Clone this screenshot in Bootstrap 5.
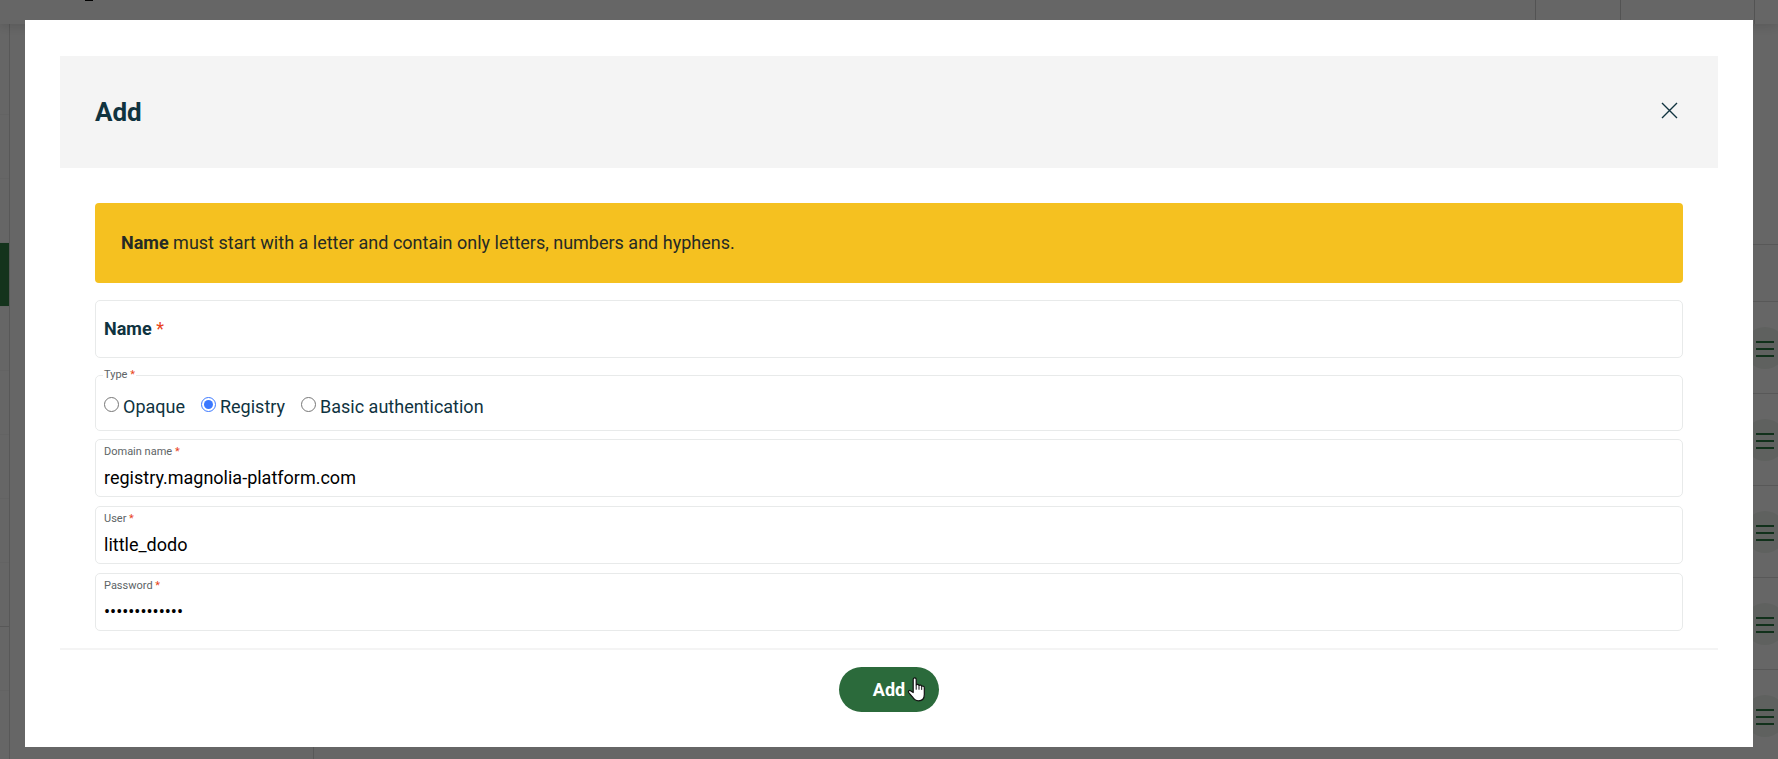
<!DOCTYPE html>
<html lang="en">
<head>
<meta charset="utf-8">
<meta name="viewport" content="width=device-width, initial-scale=1">
<title>Add</title>
<link href="https://cdn.jsdelivr.net/npm/bootstrap@5.3.0/dist/css/bootstrap.min.css" rel="stylesheet">
<style>
  body { font-family: Roboto, "Liberation Sans", sans-serif; font-size: 18px; line-height: 24px; color: #10333f; overflow: hidden; }
  a { color: inherit; }

  /* page behind the dialog */
  .topbar { height: 24px; box-shadow: 0 2px 12px rgba(0,0,0,.14); background: #fff; z-index: 1; }
  .topbar .cell { border-left: 1px solid #d0d0d0; }
  .brand-tail { width: 8px; height: 1px; margin-left: 85px; background: #000; }
  .cell-s { width: 85px; }
  .cell-m { width: 134px; }
  .cell-e { width: 24px; }
  .side { width: 10px; border-right: 1px solid #dcdcdc; padding-top: 27px; }
  .side a { display: block; height: 64px; border-bottom: 1px solid #f7f7f7; }
  .side a.current { background: #348148; width: 9px; }
  .side a.ruled { border-bottom-color: #dcdcdc; }
  .subnav { width: 304px; border-right: 1px solid #dcdcdc; }
  .listing { padding-top: 220px; }
  .list-head { height: 58px; border-top: 1px solid #dcdcdc; border-bottom: 1px solid #dcdcdc; background: #fcfcfc; }
  .list-line { height: 92px; border-bottom: 1px solid #dcdcdc; }
  .menu-btn { width: 42px; height: 42px; margin-right: -8px; border: 0; border-radius: 50%; background: #edf3ed; padding: 0; }

  /* dialog */
  .veil { background: rgba(0,0,0,.6); z-index: 10; padding: 20px 25px 13px; }
  .dialog { background: #fff; padding: 36px 35px 35px; }
  .dialog-head { background: #f4f4f4; height: 112px; padding: 0 35px; }
  .dialog-head h1 { font-size: 26px; line-height: 32px; font-weight: 700; margin: 0; color: #10333f; }
  .close-btn { border: 0; background: none; padding: 0 5px 4px; line-height: 0; }
  .dialog-body { padding: 35px 35px 17px; border-bottom: 2px solid #f4f4f4; }
  .notice { background: #f5c120; border: 0; border-radius: 4px; padding: 28px 26px; margin-bottom: 17px; color: #252a25; }
  .field { border: 1px solid #e8eaea; border-radius: 5px; height: 58px; padding: 4px 8px 0; margin-bottom: 9px; }
  .field label.tiny, .type-set legend { font-size: 11px; line-height: 16px; color: #5d6466; }
  .field input { border: 0; outline: 0; padding: 0; color: #000; background: none; height: 34px; width: 100%; }
  .field-lone { padding: 0 8px; }
  .req { color: #e8441c; }
  .type-set { border: 1px solid #e8eaea; border-radius: 5px; margin: 9px 0 8px; padding: 0 8px 11px; }
  .type-set legend { float: none; width: auto; margin: 0 0 12px -1px; padding: 0 1px; }
  .type-set input { width: 15px; height: 15px; margin: 2px 4px 0 0; accent-color: #3b78ff; }
  .go-area { padding-top: 17px; line-height: 1; }
  .go-btn { background: #2b6a3b; color: #fff; font-weight: 700; font-size: 18px; line-height: 24px; padding: 11px 34px 10px; border: 0; border-radius: 23px; }
  .pointer { left: 68px; top: 10px; }
</style>
</head>
<body>
<div class="vh-100 d-flex flex-column bg-white overflow-hidden" aria-hidden="true">
  <header class="topbar d-flex flex-shrink-0 justify-content-end position-relative">
    <div class="brand-tail me-auto"></div>
    <div class="cell cell-s"></div><div class="cell cell-m"></div><div class="cell cell-e"></div>
  </header>
  <div class="d-flex flex-grow-1">
    <nav class="side">
      <a href="#"></a><a href="#"></a><a href="#"></a><a href="#" class="current"></a><a href="#"></a><a href="#"></a><a href="#"></a><a href="#"></a><a href="#" class="ruled"></a><a href="#"></a>
    </nav>
    <div class="subnav"></div>
    <main class="listing flex-grow-1">
      <div class="list-head"></div>
      <div class="list-line d-flex align-items-center justify-content-end"><button class="menu-btn" tabindex="-1"><svg width="18" height="16" viewBox="0 0 18 16" stroke="#2b7a45" stroke-width="2"><path d="M0 1h18M0 8h18M0 15h18"/></svg></button></div>
      <div class="list-line d-flex align-items-center justify-content-end"><button class="menu-btn" tabindex="-1"><svg width="18" height="16" viewBox="0 0 18 16" stroke="#2b7a45" stroke-width="2"><path d="M0 1h18M0 8h18M0 15h18"/></svg></button></div>
      <div class="list-line d-flex align-items-center justify-content-end"><button class="menu-btn" tabindex="-1"><svg width="18" height="16" viewBox="0 0 18 16" stroke="#2b7a45" stroke-width="2"><path d="M0 1h18M0 8h18M0 15h18"/></svg></button></div>
      <div class="list-line d-flex align-items-center justify-content-end"><button class="menu-btn" tabindex="-1"><svg width="18" height="16" viewBox="0 0 18 16" stroke="#2b7a45" stroke-width="2"><path d="M0 1h18M0 8h18M0 15h18"/></svg></button></div>
      <div class="list-line d-flex align-items-center justify-content-end"><button class="menu-btn" tabindex="-1"><svg width="18" height="16" viewBox="0 0 18 16" stroke="#2b7a45" stroke-width="2"><path d="M0 1h18M0 8h18M0 15h18"/></svg></button></div>
    </main>
  </div>
</div>

<div class="veil position-fixed top-0 start-0 w-100 h-100 overflow-auto">
  <div class="dialog" role="dialog" aria-modal="true" aria-labelledby="dlg-title">
    <div class="dialog-head d-flex align-items-center justify-content-between">
      <h1 id="dlg-title">Add</h1>
      <button type="button" class="close-btn" aria-label="Close"><svg width="17" height="17" viewBox="0 0 17 17" fill="none" stroke="#10333f" stroke-width="1.4"><path d="M1 1l15 15M16 1L1 16"/></svg></button>
    </div>
    <form>
      <div class="dialog-body">
        <div class="alert notice" role="alert"><strong>Name</strong> must start with a letter and contain only letters, numbers and hyphens.</div>
        <div class="field field-lone d-flex align-items-center gap-2">
          <label for="f-name" class="fw-bold flex-shrink-0">Name <span class="req fw-normal">*</span></label>
          <input id="f-name" type="text">
        </div>
        <fieldset class="type-set">
          <legend>Type <span class="req">*</span></legend>
          <div class="d-flex gap-3">
            <div class="d-flex align-items-start"><input type="radio" name="type" id="t1"><label for="t1">Opaque</label></div>
            <div class="d-flex align-items-start"><input type="radio" name="type" id="t2" checked><label for="t2">Registry</label></div>
            <div class="d-flex align-items-start"><input type="radio" name="type" id="t3"><label for="t3">Basic authentication</label></div>
          </div>
        </fieldset>
        <div class="field d-flex flex-column">
          <label for="f-domain" class="tiny">Domain name <span class="req">*</span></label>
          <input id="f-domain" type="text" value="registry.magnolia-platform.com">
        </div>
        <div class="field d-flex flex-column">
          <label for="f-user" class="tiny">User <span class="req">*</span></label>
          <input id="f-user" type="text" value="little_dodo">
        </div>
        <div class="field d-flex flex-column mb-0">
          <label for="f-pass" class="tiny">Password <span class="req">*</span></label>
          <input id="f-pass" type="password" value="abcdefghijklm">
        </div>
      </div>
      <div class="go-area text-center">
        <button type="button" class="go-btn position-relative">Add<svg class="pointer position-absolute" width="19" height="25" viewBox="0 0 19 25"><path d="M6.200 15.500V2.600c0-2.300 3-2.300 3 0v5.600c.6-1.200 2.600-1 2.800.5.800-1 2.500-.7 2.700.7 1-.8 2.600-.2 2.600 1.300V17.500c0 4-2.200 6.300-5.800 6.300-3.100 0-4.600-1.300-6.100-4L1.700 15.700c-.9-1.600.9-2.900 2.200-1.700z" fill="#fff" stroke="#111" stroke-width="1.200" stroke-linejoin="round"/><path d="M9.200 8.500v4.200M12 9.200v3.500M14.700 10v2.900" stroke="#111" stroke-width="1"/></svg></button>
      </div>
    </form>
  </div>
</div>
<script src="https://cdn.jsdelivr.net/npm/bootstrap@5.3.0/dist/js/bootstrap.bundle.min.js"></script>
</body>
</html>
